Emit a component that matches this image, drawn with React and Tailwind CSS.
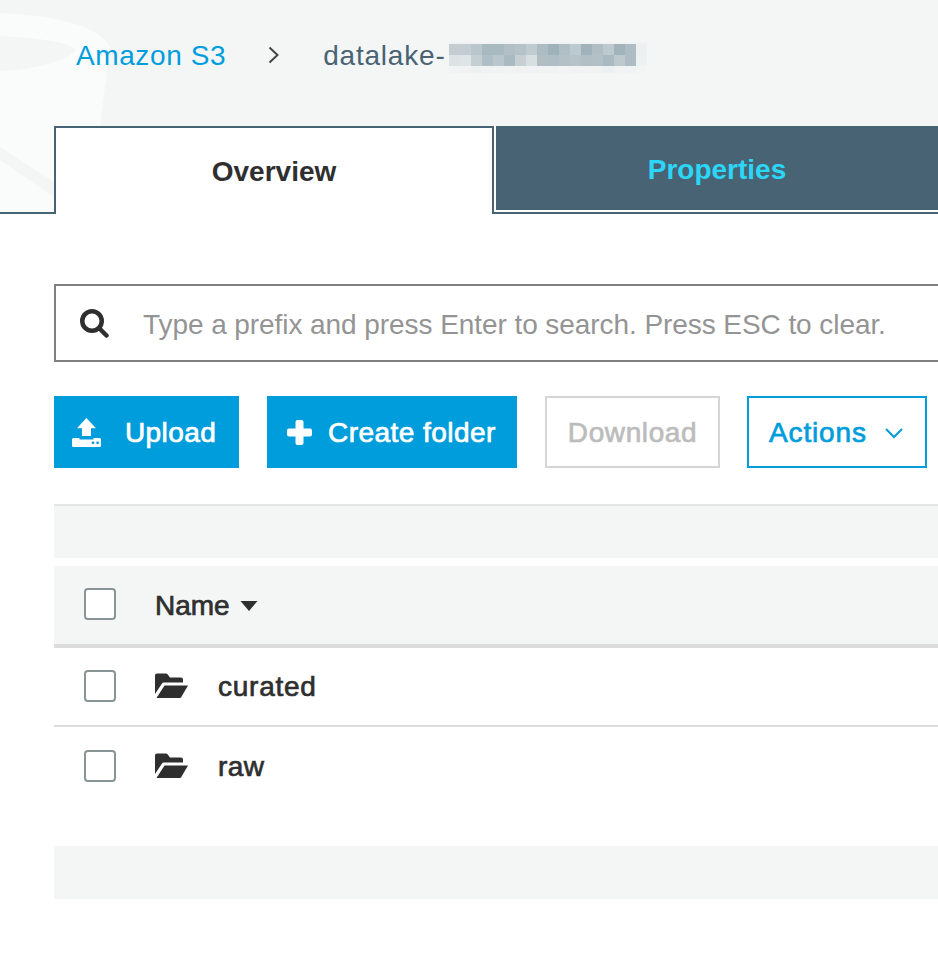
import React from "react";

const row1 = ["#c3cdd2","#c3cdd2","#b9c6cb","#a9b9c0","#a9b9c0","#b2c0c6","#b5c2c8","#bfcbd0","#adbcc3","#9fb2ba","#b0bfc5","#bcc9ce","#a0b3bb","#b1bfc5","#bdc9ce","#a1b4bc","#aebdc3","#edf0f1"];
const row2 = ["#dde3e5","#dfe4e6","#c4cfd3","#afbfc5","#b9c6cb","#aabac1","#c6d0d3","#d7dfe1","#b1bfc5","#afbdc4","#b4c1c7","#b6c3c8","#b2c0c6","#b3c1c6","#a9bac1","#bdc9cd","#aebdc3","#eef1f2"];
const row3 = ["#f0f2f3","#f1f3f3","#eef1f2","#f1f3f3","#f0f2f3","#f2f4f4","#f1f3f3","#f0f2f3","#f0f2f3","#f1f3f3","#f2f4f4","#f0f2f3","#f1f3f3","#f1f3f3","#edf0f2","#f2f4f4","#f0f2f3","#f3f5f5"];

function Mosaic() {
  return (
    <svg width="198" height="31" viewBox="0 0 198 31" className="block shrink-0" shapeRendering="crispEdges">
      {row1.map((c, i) => <rect key={i} x={i * 11} y="2" width="11" height="11" fill={c} />)}
      {row2.map((c, i) => <rect key={i} x={i * 11} y="13" width="11" height="11" fill={c} />)}
      {row3.map((c, i) => <rect key={i} x={i * 11} y="24" width="11" height="7" fill={c} />)}
      <rect x="0" y="0" width="198" height="2" fill="#f0f2f3" />
    </svg>
  );
}

function Bucket() {
  return (
    <svg width="120" height="212" viewBox="0 0 120 212" className="absolute left-0 top-0">
      <path d="M0 13 C50 15 100 25 110 47 L100 126 L90 212 L0 212 Z" fill="#fafbfb" />
      <path d="M0 36 C40 38 68 42 76 50 C60 64 30 70 0 71 Z" fill="#f4f6f6" />
      <path d="M0 147 L54 182 L54 197 L0 160 Z" fill="#f4f6f6" />
    </svg>
  );
}

function Check({ className = "" }) {
  return <div className={`w-8 h-8 shrink-0 bg-white border-2 border-[#879596] rounded-[4px] ${className}`} />;
}

function Folder() {
  return (
    <svg width="34" height="26" viewBox="0 0 34 26" className="block shrink-0" fill="#2f2f2f">
      <path d="M0 2.5 A2 2 0 0 1 2 0.5 H11 A2 2 0 0 1 12.5 1.3 L15 4.5 H26 A2 2 0 0 1 28 6.5 V9.5 H9 A2 2 0 0 0 7 10.5 L0 21 Z" />
      <path d="M9.5 12.5 H33 L26 24.5 A1.5 1.5 0 0 1 25 25 H1.5 Z" />
    </svg>
  );
}

const boldish = "[-webkit-text-stroke:0.7px_currentColor]";

export default function App() {
  return (
    <div className="w-[938px] h-[978px] overflow-hidden bg-white font-['Liberation_Sans',Arial,sans-serif] text-[28px]">
      <header className="relative h-[214px] bg-[#f4f6f6] border-b-2 border-[#486374] flex flex-col">
        <Bucket />
        <nav className="relative h-[126px] shrink-0 flex items-start pl-[76px] pt-[39px]">
          <span className="text-[#009ddc] leading-[34px] tracking-[0.6px]">Amazon S3</span>
          <svg width="12" height="18" viewBox="0 0 12 18" className="ml-[42px] mt-[7px]" fill="none" stroke="#444" strokeWidth="2">
            <path d="M1.5 1.5 L9.5 9 L1.5 16.5" />
          </svg>
          <span className="ml-[43px] text-[#486374] leading-[34px] tracking-[0.8px]">datalake-</span>
          <div className="ml-[3px] mt-[3px]"><Mosaic /></div>
        </nav>
        <div className="relative flex items-start pl-[54px]">
          <div className="w-[440px] h-[88px] bg-white border-2 border-b-0 border-[#486374] flex items-center justify-center pt-[1px] font-bold text-[#2f2f2f]">
            Overview
          </div>
          <div className="flex-1 h-[86px] bg-[#486374] border-l-2 border-b-2 border-white flex items-center justify-center pt-[3px] font-bold text-[#2cd6f7]">
            Properties
          </div>
        </div>
      </header>

      <main className="pl-[54px]">
        <div className="mt-[70px] h-[78px] w-[900px] border-2 border-[#7f7f7f] flex items-center pl-[24px]">
          <svg width="29" height="29" viewBox="0 0 29 29" fill="none" stroke="#2f2f2f" strokeWidth="4.5" strokeLinecap="round" className="shrink-0">
            <circle cx="12" cy="12" r="9.75" />
            <path d="M19.5 19.5 L26.5 26.5" />
          </svg>
          <span className="ml-[34px] pt-[3px] text-[#949494] tracking-[-0.07px] whitespace-nowrap">Type a prefix and press Enter to search. Press ESC to clear.</span>
        </div>

        <div className="mt-[34px] flex items-stretch h-[72px]">
          <button className={`w-[185px] bg-[#009ddc] text-white flex items-center pl-[18px] ${boldish} tracking-[0.4px]`}>
            <svg width="29" height="29" viewBox="0 0 29 29" className="shrink-0">
              <path d="M14.4 0 L24 10.3 H19 V18 H10 V10.3 H5 Z" fill="#fff" />
              <path d="M1.5 20 H7.5 V21.5 H21.5 V20 H27.5 A1.5 1.5 0 0 1 29 21.5 V27.5 A1.5 1.5 0 0 1 27.5 29 H1.5 A1.5 1.5 0 0 1 0 27.5 V21.5 A1.5 1.5 0 0 1 1.5 20 Z" fill="#fff" />
              <circle cx="21" cy="24.8" r="1.4" fill="#009ddc" />
              <circle cx="25.6" cy="24.8" r="1.4" fill="#009ddc" />
            </svg>
            <span className="ml-[24px] pt-[2px]">Upload</span>
          </button>
          <button className={`ml-[28px] w-[250px] bg-[#009ddc] text-white flex items-center pl-[20px] ${boldish} tracking-[0.45px]`}>
            <svg width="25" height="25" viewBox="0 0 25 25" className="shrink-0" fill="#fff">
              <rect x="8.5" y="0" width="8" height="25" rx="2" />
              <rect x="0" y="8.5" width="25" height="8" rx="2" />
            </svg>
            <span className="ml-[16px] pt-[2px]">Create folder</span>
          </button>
          <button className={`ml-[28px] w-[175px] border-2 border-[#d5d5d5] text-[#bcbcbc] flex items-center justify-center pt-[2px] ${boldish} tracking-[0.6px]`}>
            Download
          </button>
          <button className={`ml-[27px] w-[180px] border-2 border-[#009ddc] text-[#009ddc] flex items-center pl-[20px] ${boldish} tracking-[0.85px]`}>
            <span className="pt-[2px]">Actions</span>
            <svg width="18" height="11" viewBox="0 0 18 11" fill="none" stroke="#009ddc" strokeWidth="2" className="ml-[18px] mt-[3px] shrink-0">
              <path d="M1 1 L9 9 L17 1" />
            </svg>
          </button>
        </div>

        <div className="mt-[36px] h-[54px] bg-[#f4f6f6] border-t-2 border-[#e4e6e6]" />

        <div className={`mt-[8px] h-[82px] bg-[#f4f6f6] border-b-4 border-[#dcdcdc] flex items-center pl-[30px] text-[#2f2f2f] ${boldish}`}>
          <Check className="-mt-[2px]" />
          <span className="ml-[39px] pt-[2px]">Name</span>
          <svg width="18" height="10" viewBox="0 0 18 10" className="ml-[10px] mt-[2px] shrink-0" fill="#2f2f2f">
            <path d="M0.5 0 H17.5 L9 10 Z" />
          </svg>
        </div>

        <div className={`h-[79px] border-b-2 border-[#dcdcdc] flex items-center pl-[30px] text-[#2f2f2f] ${boldish}`}>
          <Check className="-mt-[1px]" />
          <span className="ml-[39px] -mt-[1px]"><Folder /></span>
          <span className="ml-[29px] tracking-[0.75px]">curated</span>
        </div>
        <div className={`h-[80px] flex items-center pl-[30px] text-[#2f2f2f] ${boldish}`}>
          <Check className="-mt-[2px]" />
          <span className="ml-[39px] -mt-[2px]"><Folder /></span>
          <span className="ml-[29px] tracking-[0.4px]">raw</span>
        </div>

        <div className="mt-[39px] h-[53px] bg-[#f4f6f6]" />
      </main>
    </div>
  );
}
